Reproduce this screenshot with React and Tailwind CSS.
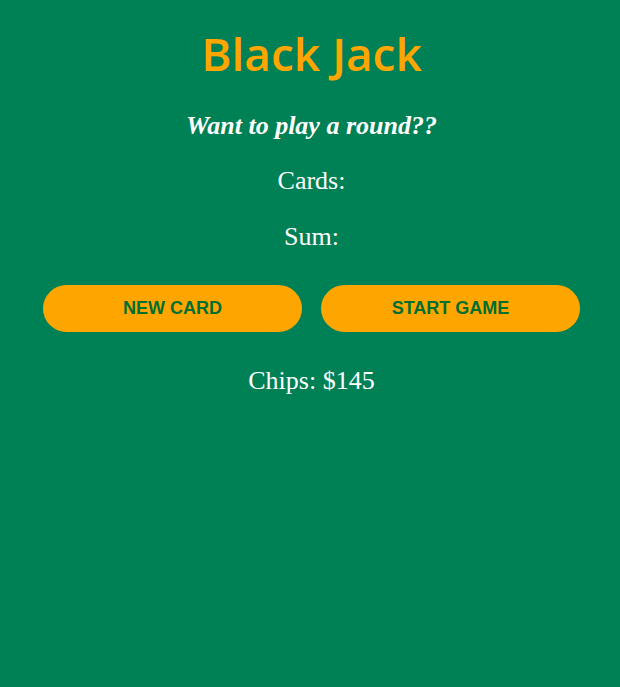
export default function App() {
  return (
    <div className="min-h-[687px] bg-[#008055] pl-[3px] text-center text-white [font-family:'Liberation_Serif',serif]">
      <div className="flex flex-col items-center">
        <h1 className="mt-[29px] text-[46px] font-semibold leading-[48px] text-[#ffa500] [font-family:'Open_Sans',sans-serif]">
          Black Jack
        </h1>
        <p className="mt-[34px] text-[26px] font-bold italic leading-[30px]">Want to play a round??</p>
        <p className="mt-[25px] text-[26px] leading-[30px]">Cards:</p>
        <p className="mt-[26px] text-[26px] leading-[30px]">Sum:</p>
        <div className="mt-[33px] flex gap-[19px]">
          <button className="h-[47px] w-[259px] rounded-full bg-[#ffa500] text-[18px] font-bold text-[#016f32] [font-family:'Liberation_Sans',sans-serif]">
            NEW CARD
          </button>
          <button className="h-[47px] w-[259px] rounded-full bg-[#ffa500] text-[18px] font-bold text-[#016f32] [font-family:'Liberation_Sans',sans-serif]">
            START GAME
          </button>
        </div>
        <p className="mt-[34px] text-[26px] leading-[30px]">Chips: $145</p>
      </div>
    </div>
  );
}
